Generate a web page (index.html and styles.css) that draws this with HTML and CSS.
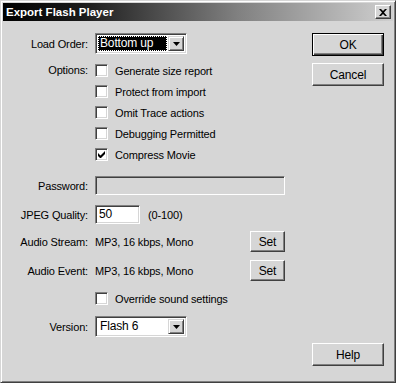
FILE: index.html
```html
<!DOCTYPE html>
<html>
<head>
<meta charset="utf-8">
<link rel="stylesheet" href="styles.css">
</head>
<body>
<div class="window">
  <div class="titlebar">
    <span class="title">Export Flash Player</span>
    <span class="close"><svg width="8" height="7" viewBox="0 0 8 7"><path d="M0 0h2l2 2 2-2h2L5 3.5 8 7H6L4 5 2 7H0l3-3.5z" fill="#000"/></svg></span>
  </div>
  <div class="content">
    <div class="form">
      <div class="row r-load">
        <label class="lbl">Load Order:</label>
        <div class="select">
          <span class="sel-text hl">Bottom up</span>
          <span class="arrow"><svg width="7" height="4" viewBox="0 0 7 4"><path d="M0 0h7L3.5 4z" fill="#000"/></svg></span>
        </div>
      </div>
      <div class="row r-opt">
        <label class="lbl">Options:</label>
        <div class="checks">
          <div class="check"><span class="box"></span>Generate size report</div>
          <div class="check"><span class="box"></span>Protect from import</div>
          <div class="check"><span class="box"></span>Omit Trace actions</div>
          <div class="check"><span class="box"></span>Debugging Permitted</div>
          <div class="check"><span class="box"><svg width="7" height="7" viewBox="0 0 7 7"><path d="M0 2v3l2 2h1l4-4V0L2.5 4.5z" fill="#000"/></svg></span>Compress Movie</div>
        </div>
      </div>
      <div class="row r-pass">
        <label class="lbl">Password:</label>
        <div class="input disabled pass"></div>
      </div>
      <div class="row r-jpeg">
        <label class="lbl">JPEG Quality:</label>
        <div class="input jpeg">50</div>
        <span class="hint">(0-100)</span>
      </div>
      <div class="row r-audio">
        <label class="lbl">Audio Stream:</label>
        <span class="value">MP3, 16 kbps, Mono</span>
        <button class="btn small">Set</button>
      </div>
      <div class="row r-audio2">
        <label class="lbl">Audio Event:</label>
        <span class="value">MP3, 16 kbps, Mono</span>
        <button class="btn small">Set</button>
      </div>
      <div class="row r-over">
        <span class="lbl"></span>
        <div class="check"><span class="box"></span>Override sound settings</div>
      </div>
      <div class="row r-ver">
        <label class="lbl">Version:</label>
        <div class="select">
          <span class="sel-text">Flash 6</span>
          <span class="arrow"><svg width="7" height="4" viewBox="0 0 7 4"><path d="M0 0h7L3.5 4z" fill="#000"/></svg></span>
        </div>
      </div>
    </div>
    <div class="buttons">
      <button class="btn big default">OK</button>
      <button class="btn big">Cancel</button>
      <div class="spacer"></div>
      <button class="btn big">Help</button>
    </div>
  </div>
</div>
</body>
</html>
```
FILE: styles.css
```css
html, body {
  margin: 0;
  padding: 0;
  background: #d6d6d6;
}
body {
  font-family: "Liberation Sans", Arial, sans-serif;
  font-size: 11px;
  letter-spacing: -0.15px;
  color: #000;
}
.window {
  width: 396px;
  height: 383px;
  box-sizing: border-box;
  background: #d6d6d6;
  border-style: solid;
  border-width: 1px;
  border-color: #d6d6d6 #404040 #404040 #d6d6d6;
  box-shadow: inset 1px 1px 0 #fff, inset -1px -1px 0 #808080;
  padding: 2px;
  display: flex;
  flex-direction: column;
}
.titlebar {
  height: 18px;
  background: linear-gradient(to right, #000 0%, #1a1a1a 20%, #808080 60%, #cfcfcf 100%);
  display: flex;
  align-items: center;
  justify-content: space-between;
  padding: 0 2px 0 3px;
}
.title {
  color: #fff;
  font-weight: bold;
  font-size: 11.5px;
  letter-spacing: 0;
}
.close {
  width: 16px;
  height: 14px;
  box-sizing: border-box;
  background: #d6d6d6;
  border-style: solid;
  border-width: 1px;
  border-color: #fff #404040 #404040 #fff;
  box-shadow: inset -1px -1px 0 #808080;
  display: flex;
  align-items: center;
  justify-content: center;
}
.content {
  flex: 1;
  display: flex;
  padding: 12px 9px 14px 0;
}
.form {
  flex: 1;
  display: flex;
  flex-direction: column;
}
.row {
  display: flex;
  align-items: center;
  gap: 7px;
}
.lbl {
  width: 85px;
  text-align: right;
  flex: none;
}
.r-load { height: 21px; }
.r-opt { margin-top: 9px; align-items: flex-start; }
.r-opt .lbl { line-height: 15px; }
.checks { display: flex; flex-direction: column; gap: 6px; }
.check {
  display: flex;
  align-items: center;
  gap: 7px;
  height: 15px;
}
.box {
  width: 13px;
  height: 13px;
  box-sizing: border-box;
  background: #fff;
  border-style: solid;
  border-width: 1px;
  border-color: #808080 #fff #fff #808080;
  box-shadow: inset 1px 1px 0 #404040, inset -1px -1px 0 #d6d6d6;
  display: flex;
  align-items: center;
  justify-content: center;
}
.select {
  width: 92px;
  height: 21px;
  box-sizing: border-box;
  background: #fff;
  border-style: solid;
  border-width: 1px;
  border-color: #808080 #fff #fff #808080;
  box-shadow: inset 1px 1px 0 #404040, inset -1px -1px 0 #d6d6d6;
  padding: 2px;
  display: flex;
}
.sel-text {
  flex: 1;
  padding-left: 2px;
  line-height: 15px;
  font-size: 12px;
}
.sel-text.hl {
  background: #000;
  color: #fff;
  outline: 1px dotted #fff;
  outline-offset: -1px;
}
.arrow {
  width: 16px;
  height: 15px;
  margin-left: 1px;
  box-sizing: border-box;
  background: #d6d6d6;
  border-style: solid;
  border-width: 1px;
  border-color: #d6d6d6 #404040 #404040 #d6d6d6;
  box-shadow: inset 1px 1px 0 #fff, inset -1px -1px 0 #808080;
  display: flex;
  align-items: center;
  justify-content: center;
}
.input {
  height: 19px;
  box-sizing: border-box;
  background: #fff;
  border-style: solid;
  border-width: 1px;
  border-color: #808080 #fff #fff #808080;
  box-shadow: inset 1px 1px 0 #404040, inset -1px -1px 0 #d6d6d6;
  padding: 0 3px;
  line-height: 17px;
  font-size: 12px;
}
.input.disabled { background: #d6d6d6; }
.pass { width: 190px; }
.r-pass { margin-top: 14px; }
.r-jpeg { margin-top: 10px; }
.jpeg { width: 45px; }
.hint { margin-left: 1px; }
.value { width: 148px; }
.r-audio { margin-top: 7px; height: 21px; }
.r-audio2 { margin-top: 8px; height: 21px; }
.r-over { margin-top: 10px; }
.r-ver { margin-top: 10px; }
.btn {
  font-family: inherit;
  font-size: 12px;
  letter-spacing: -0.15px;
  color: #000;
  background: #d6d6d6;
  box-sizing: border-box;
  border-style: solid;
  border-width: 1px;
  border-color: #fff #404040 #404040 #fff;
  box-shadow: inset -1px -1px 0 #808080;
  padding: 0;
  margin: 0;
}
.btn.small { width: 35px; height: 21px; margin-left: 0; }
.btn.big { width: 72px; height: 23px; }
.btn.default {
  border-color: #000;
  box-shadow: inset 1px 1px 0 #fff, inset -1px -1px 0 #404040, inset -2px -2px 0 #808080;
}
.buttons {
  display: flex;
  flex-direction: column;
  gap: 7px;
  width: 72px;
}
.spacer { flex: 1; }
```
